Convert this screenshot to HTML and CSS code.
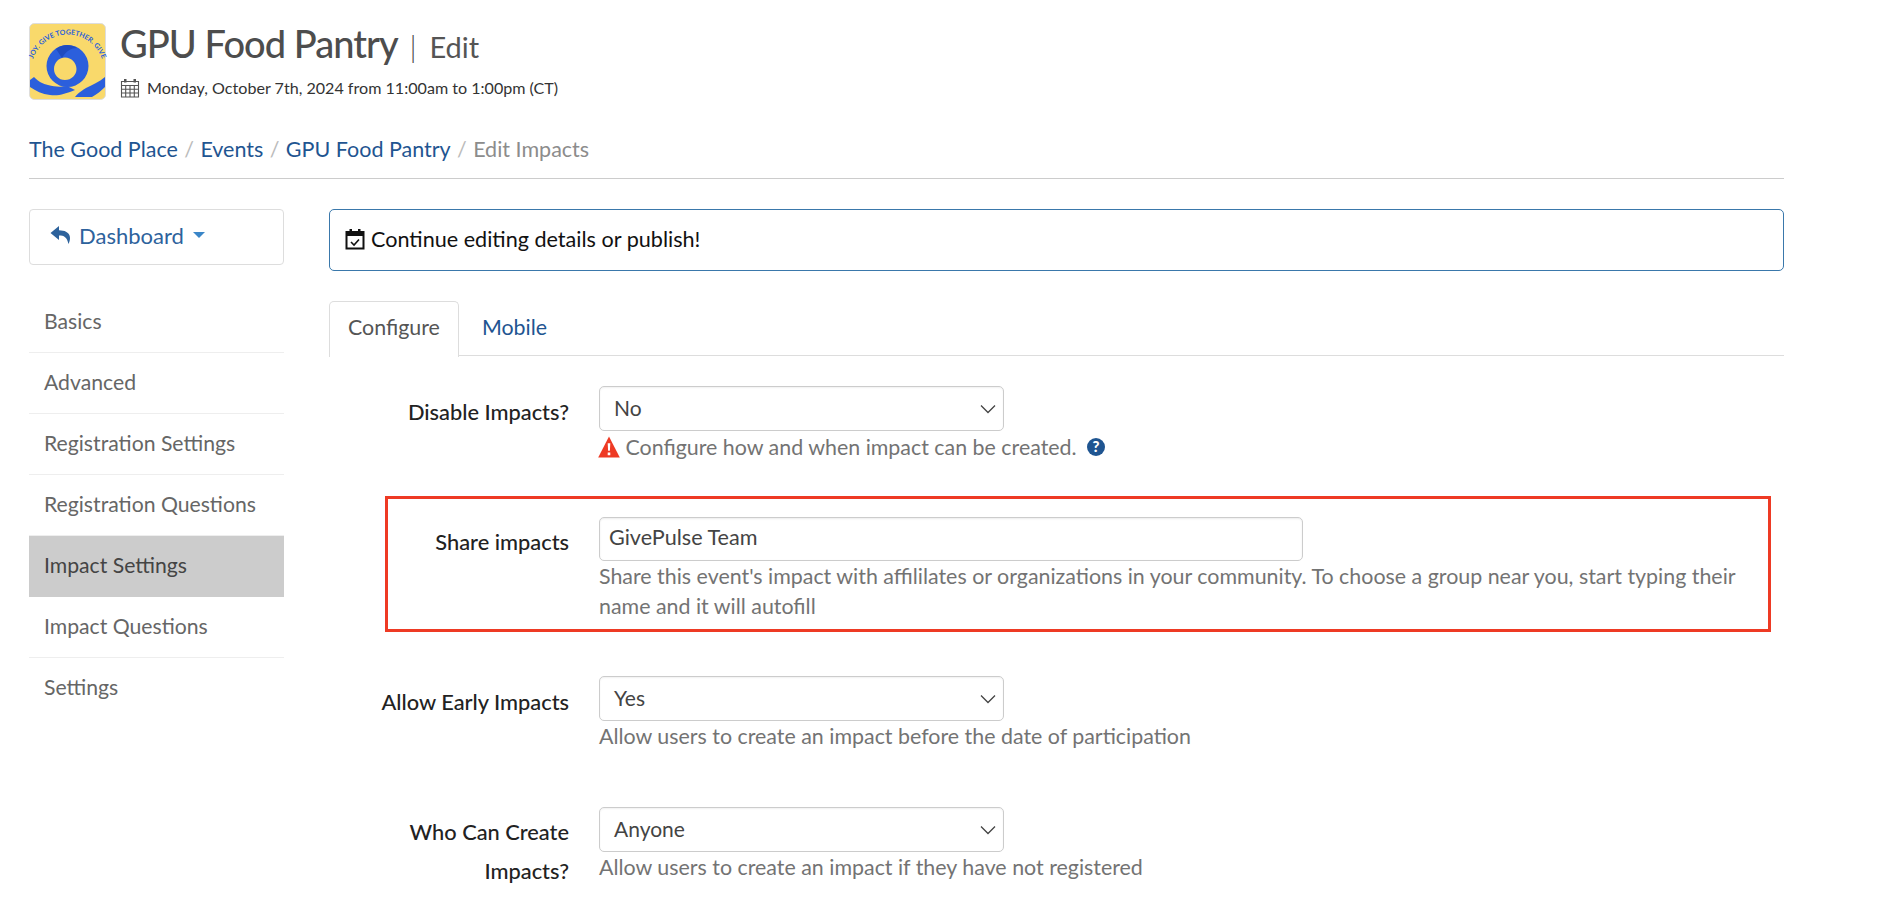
FILE: index.html
```html
<!DOCTYPE html>
<html lang="en">
<head>
<meta charset="utf-8">
<title>GPU Food Pantry | Edit</title>
<link rel="stylesheet" href="styles.css">
</head>
<body>
<div class="page">
  <header class="head">
    <svg class="logo" viewBox="0 0 77 77" aria-hidden="true">
      <defs><path id="arc" d="M2.500 42 A36.500 36.500 0 0 1 74.500 42"/></defs>
      <rect x="0.500" y="0.500" width="76" height="76" rx="5" fill="#f9d96b" stroke="#ddd"/>
      <text class="logo-text"><textPath href="#arc" startOffset="50%" text-anchor="middle">JOY. GIVE TOGETHER. GIVE</textPath></text>
      <path fill-rule="evenodd" d="M38.500 22 A21 21 0 1 1 38.500 64 A21 21 0 1 1 38.500 22 Z M36 34.500 C29.500 34.500 25 40 25 46 C25 52 29.500 57 36 57 C42.500 57 47.500 52 47.500 46 C47.500 40 42.500 34.500 36 34.500 Z" fill="#2b5fdc"/>
      <path d="M27 26 C33 21 42 21 48 25 C42 25 37 28 33 35 C31 32 29 29 27 26 Z" fill="#1f4cc0"/>
      <path d="M5 54 C10 59 14 61 19 62 C26 64 32 64 38 63 L46 67 C36 71 30 73 21 72 C13 71 7 68 1 64 L1 57 Z" fill="#2b5fdc"/>
      <path d="M46 74 C50 69 54 67 57 65 C63 62 70 59 76 54 L76 64 C72 68 68 71 63 74 Z" fill="#2b5fdc"/>
    </svg>
    <div class="head-text">
      <h1 class="title">GPU Food Pantry <span class="sep">|</span> <small class="sub">Edit</small></h1>
      <div class="when">
        <svg class="cal" viewBox="0 0 20 20" aria-hidden="true"><path d="M4 1h2.500v3.500H4zM13.500 1H16v3.500h-2.500z" fill="#555"/><path d="M1.500 3.500h17v15.500h-17zM1.500 7.500h17M1.500 11.200h17M1.500 15h17M5.700 7.500V19M10 7.500V19M14.300 7.500V19" fill="none" stroke="#555" stroke-width="1.100"/></svg>
        <span>Monday, October 7th, 2024 from 11:00am to 1:00pm (CT)</span>
      </div>
    </div>
  </header>

  <nav class="crumbs">
    <a href="#">The Good Place</a><i>/</i><a href="#">Events</a><i>/</i><a href="#">GPU Food Pantry</a><i>/</i><span>Edit Impacts</span>
  </nav>

  <div class="cols">
    <aside class="side">
      <a class="dash" href="#">
        <svg class="reply" viewBox="0 0 22 20" aria-hidden="true"><path d="M9 1 L0.500 8 L9 15 V10.500 C14 10.500 17 12 18.500 19 C21.500 13 21 5.500 9 5.200 Z" fill="#2d629c"/></svg>
        <span>Dashboard</span><b class="caret"></b>
      </a>
      <ul class="menu">
        <li>Basics</li>
        <li>Advanced</li>
        <li>Registration Settings</li>
        <li>Registration Questions</li>
        <li class="on">Impact Settings</li>
        <li>Impact Questions</li>
        <li>Settings</li>
      </ul>
    </aside>

    <main class="main">
      <div class="alert">
        <svg class="cal-check" viewBox="0 0 20 22" aria-hidden="true"><path d="M4.500 1h2.500v4H4.500zM13 1h2.500v4H13z" fill="#111"/><path d="M1.500 4h17v16.500h-17z" fill="none" stroke="#111" stroke-width="2"/><path d="M1.500 4h17v4h-17z" fill="#111"/><path d="M6 14l3 3 5-5.500" fill="none" stroke="#111" stroke-width="1.600"/></svg>
        <span>Continue editing details or publish!</span>
      </div>

      <div class="tabs">
        <a class="tab active" href="#">Configure</a>
        <a class="tab" href="#">Mobile</a>
      </div>

      <form class="form">
        <div class="row r1">
          <label class="lab">Disable Impacts?</label>
          <div class="field">
            <div class="select">No<svg class="chev" viewBox="0 0 16 10" aria-hidden="true"><path d="M1 1.500l7 7 7-7" fill="none" stroke="#444" stroke-width="1.300"/></svg></div>
            <p class="help">
              <svg class="warn" viewBox="0 0 22 20" preserveAspectRatio="none" aria-hidden="true"><path d="M11 0.500L21.800 19.500H0.200z" fill="#ee3a24"/><path d="M9.700 6.500h2.600l-.4 7h-1.800zM9.700 15h2.600v2.600H9.700z" fill="#fff"/></svg>
              Configure how and when impact can be created.
              <svg class="q" viewBox="0 0 18 18" aria-hidden="true"><circle cx="9" cy="9" r="9" fill="#1f5591"/><text x="9" y="14" class="q-mark">?</text></svg>
            </p>
          </div>
        </div>

        <div class="boxed">
          <div class="row r2">
            <label class="lab">Share impacts</label>
            <div class="field">
              <div class="input">GivePulse Team</div>
              <p class="help">Share this event's impact with affililates or organizations in your community. To choose a group near you, start typing their name and it will autofill</p>
            </div>
          </div>
        </div>

        <div class="row r3">
          <label class="lab">Allow Early Impacts</label>
          <div class="field">
            <div class="select">Yes<svg class="chev" viewBox="0 0 16 10" aria-hidden="true"><path d="M1 1.500l7 7 7-7" fill="none" stroke="#444" stroke-width="1.300"/></svg></div>
            <p class="help">Allow users to create an impact before the date of participation</p>
          </div>
        </div>

        <div class="row r4">
          <label class="lab">Who Can Create Impacts?</label>
          <div class="field">
            <div class="select">Anyone<svg class="chev" viewBox="0 0 16 10" aria-hidden="true"><path d="M1 1.500l7 7 7-7" fill="none" stroke="#444" stroke-width="1.300"/></svg></div>
            <p class="help">Allow users to create an impact if they have not registered</p>
          </div>
        </div>
      </form>
    </main>
  </div>
</div>
</body>
</html>
```

FILE: styles.css
```css
* { box-sizing: border-box; }
html, body { margin: 0; height: 100%; overflow: hidden; background: #fff; }
body { font-family: Lato, "Open Sans", sans-serif; font-size: 20px; color: #333; }
a { color: #1f5591; text-decoration: none; }
.page { width: 1755px; margin-left: 29px; padding-top: 23px; }

.head { display: flex; gap: 14px; height: 77px; }
.logo { width: 77px; height: 77px; flex: none; overflow: visible; }
.logo-text { font-family: Lato, sans-serif; font-size: 7px; font-weight: 700; fill: #2b5fdc; }
.head-text { display: flex; flex-direction: column; margin-top: -3px; }
.title { margin: 0; font-size: 38px; line-height: 46px; font-weight: 500; letter-spacing: -0.95px; color: #4d4d4d; white-space: nowrap; }
.sep { font-weight: 300; font-size: 30px; margin: 0 4px; letter-spacing: 0; }
.sub { font-size: 29px; font-weight: 400; letter-spacing: 0; color: #555; }
.when { display: flex; align-items: center; gap: 7px; margin-top: 7px; font-size: 16.100px; line-height: 22px; color: #333; }
.cal { width: 20px; height: 20px; }

.crumbs { margin-top: 37px; padding-bottom: 17px; border-bottom: 1px solid #ccc; font-size: 21.500px; line-height: 24px; color: #8c8c8c; }
.crumbs i { font-style: normal; color: #bbb; margin: 0 6.400px; }

.cols { display: flex; margin-top: 30px; }
.side { width: 255px; flex: none; }
.dash { display: flex; align-items: center; height: 56px; padding: 0 0 4px 20px; border: 1px solid #ddd; border-radius: 4px; font-size: 22px; color: #2d629c; }
.reply { width: 22px; height: 20px; margin-right: 7px; }
.caret { width: 0; height: 0; margin-left: 9px; border: 6px solid transparent; border-top-color: #3a86c8; border-bottom: 0; }
.menu { list-style: none; margin: 27px 0 0; padding: 0; font-size: 21.200px; color: #666; }
.menu li { height: 61px; padding: 15px 15px 0; line-height: 28px; border-bottom: 1px solid #eee; }
.menu li:last-child { border-bottom: 0; }
.menu .on { background: #ccc; color: #444; border-bottom-color: #ccc; }

.main { flex: 1; margin-left: 45px; min-width: 0; }
.alert { display: flex; align-items: center; gap: 6px; height: 62px; padding: 0 0 3px 15px; border: 1px solid #3a78ab; border-radius: 5px; font-size: 21.600px; color: #111; }
.cal-check { width: 20px; height: 22px; }

.tabs { display: flex; margin-top: 30px; border-bottom: 1px solid #ddd; height: 55px; }
.tab { height: 55px; padding: 0 18px; line-height: 50px; font-size: 21.400px; border: 1px solid transparent; border-bottom: 0; border-radius: 5px 5px 0 0; margin-right: 4px; }
.tab.active { color: #555; background: #fff; border-color: #ddd; height: 56px; }

.form { padding-top: 30px; }
.row { display: flex; }
.lab { width: 240px; flex: none; text-align: right; font-weight: 500; color: #222; font-size: 21.800px; line-height: 39px; padding-top: 6px; }
.field { margin-left: 30px; flex: 1; min-width: 0; }
.select, .input { border: 1px solid #ccc; border-radius: 5px; font-size: 21px; color: #444; }
.select { position: relative; width: 405px; height: 45px; padding-left: 14px; line-height: 41px; box-shadow: inset 0 1px 2px rgba(0,0,0,.06); }
.chev { position: absolute; right: 7px; top: 17px; width: 16px; height: 10px; }
.input { width: 704px; height: 44px; padding-left: 9px; font-size: 21.600px; line-height: 39px; box-shadow: inset 0 1px 2px rgba(0,0,0,.08); }
.help { margin: 0; font-size: 21.400px; line-height: 30px; color: #737373; }
.r1 .help { padding-top: 1px; }
.warn { width: 22px; height: 22px; vertical-align: -3px; margin-left: -1px; }
.q { width: 18px; height: 18px; vertical-align: -1px; margin-left: 5px; }
.q-mark { font-size: 15px; font-weight: 900; fill: #fff; text-anchor: middle; font-family: Lato, sans-serif; }

.boxed { margin: 34px 0 0 56px; width: 1386px; height: 136px; border: 3px solid #ee3a24; padding-top: 18px; }
.r2 { margin-left: -59px; }
.r2 .lab { padding-top: 5px; }
.r2 .help { width: 1160px; }
.r3 { margin-top: 44px; }
.r4 { margin-top: 56px; }
.r4 .lab { padding-top: 5px; }
```
